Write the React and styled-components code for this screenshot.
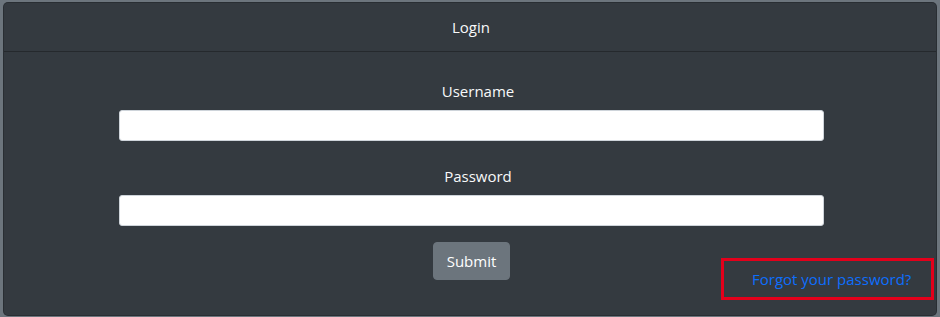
import React from "react";
import styled, { createGlobalStyle } from "styled-components";

const Global = createGlobalStyle`
  html, body { margin: 0; padding: 0; background: #6c757d; }
  body { font-family: "Open Sans", "Noto Sans", sans-serif; font-size: 16px; }
  * { box-sizing: border-box; }
`;

const Page = styled.div`
  padding: 2px 3px 1px 3px;
`;

const Card = styled.section`
  height: 314px;
  background: #343a40;
  border: 1px solid rgba(0, 0, 0, 0.2);
  border-radius: 5px;
  display: flex;
  flex-direction: column;
  color: #f8f9fa;
`;

const Header = styled.header`
  height: 49px;
  display: flex;
  align-items: center;
  justify-content: center;
  padding-left: 2px;
  border-bottom: 1px solid #25292d;
  font-size: 15px;
`;

const Body = styled.div`
  flex: 1;
  padding: 27px 0 15px 3px;
  display: flex;
  flex-direction: column;
  align-items: center;
`;

const Field = styled.div`
  width: 705px;
  display: flex;
  flex-direction: column;
  align-items: center;
  margin-bottom: ${(p) => p.$mb}px;
`;

const Label = styled.label`
  line-height: 24px;
  font-size: 15px;
  margin-bottom: 7px;
  padding-left: 13px;
`;

const Input = styled.input`
  width: 100%;
  height: 31px;
  border: 1px solid #ced4da;
  border-radius: 3px;
  background: #fff;
`;

const ActionRow = styled.div`
  width: 100%;
  display: grid;
  grid-template-columns: 1fr auto 1fr;
  height: 58px;
`;

const Submit = styled.button`
  grid-column: 2;
  align-self: start;
  width: 77px;
  height: 38px;
  background: #6c757d;
  color: #fff;
  border: 1px solid #6c757d;
  border-radius: 4px;
  font-family: inherit;
  font-size: 15px;
  padding: 0;
`;

const LinkBox = styled.div`
  grid-column: 3;
  justify-self: end;
  align-self: end;
  width: 213px;
  height: 42px;
  margin-right: 2px;
  border: 3px solid #e3001b;
  display: flex;
  align-items: center;
  padding-left: 28px;
`;

const ForgotLink = styled.a`
  color: #0d6efd;
  text-decoration: none;
  font-size: 15px;
`;

export default function App() {
  return (
    <>
      <Global />
      <Page>
        <Card>
          <Header>Login</Header>
          <Body>
            <Field $mb={23}>
              <Label htmlFor="username">Username</Label>
              <Input id="username" type="text" />
            </Field>
            <Field $mb={16}>
              <Label htmlFor="password">Password</Label>
              <Input id="password" type="password" />
            </Field>
            <ActionRow>
              <Submit type="submit">Submit</Submit>
              <LinkBox>
                <ForgotLink href="#">Forgot your password?</ForgotLink>
              </LinkBox>
            </ActionRow>
          </Body>
        </Card>
      </Page>
    </>
  );
}
